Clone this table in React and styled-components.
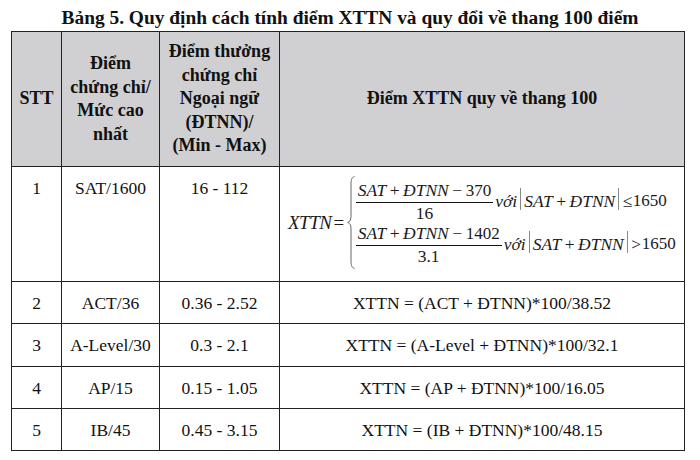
import React from "react";
import styled, { createGlobalStyle } from "styled-components";

const GlobalStyle = createGlobalStyle`
  html, body { margin: 0; padding: 0; background: #ffffff; }
  body { font-family: "Liberation Serif", "Times New Roman", serif; color: #111; }
`;

const Page = styled.div`
  width: 700px;
  height: 460px;
  padding-top: 7px;
  box-sizing: border-box;
  display: flex;
  flex-direction: column;
`;

const Title = styled.div`
  font-size: 19.4px;
  font-weight: bold;
  line-height: 22px;
  text-align: center;
  margin-bottom: 2px;
`;

const TableWrap = styled.div`
  padding-left: 11px;
`;

const Table = styled.table`
  border-collapse: collapse;
  table-layout: fixed;
  width: 673px;
`;

const Col = styled.col`
  width: ${(p) => p.$w}px;
`;

const Row = styled.tr`
  height: ${(p) => p.$h}px;
`;

const HeadCell = styled.th`
  background: #d0cfd2;
  border: 1px solid #222;
  font-size: 18px;
  font-weight: bold;
  line-height: 23.5px;
  text-align: center;
  vertical-align: middle;
  padding: 0 4px;
`;

const Cell = styled.td`
  border: 1px solid #222;
  font-size: 17.5px;
  line-height: 20px;
  text-align: center;
  vertical-align: ${(p) => (p.$top ? "top" : "middle")};
  padding: ${(p) => (p.$top ? "11px 2px 0" : "0 2px")};
  white-space: nowrap;
`;

const FormulaCell = styled.td`
  border: 1px solid #222;
  padding: 0 0 3px 8px;
  vertical-align: middle;
`;

const Formula = styled.div`
  display: flex;
  align-items: center;
  font-size: 17.5px;
  line-height: 18px;
  white-space: nowrap;
  color: #1a1a1a;
`;

const Var = styled.span`
  font-style: italic;
`;

const Op = styled.span`
  margin: 0 ${(p) => p.$m ?? 3.5}px;
`;

const Digits = styled.span`
  font-size: 17px;
`;

const Lhs = styled.div`
  display: flex;
  align-items: baseline;
  font-size: 19px;
  letter-spacing: -0.5px;
`;

const BraceBox = styled.svg`
  display: block;
  flex: none;
  margin-left: 1px;
`;

const Cases = styled.div`
  display: flex;
  flex-direction: column;
  gap: 2px;
  margin-left: 1px;
`;

const CaseRow = styled.div`
  display: flex;
  align-items: center;
`;

const Frac = styled.div`
  display: inline-flex;
  flex-direction: column;
  align-items: stretch;
  text-align: center;
`;

const Num = styled.div`
  padding: 0 2px 2px;
  border-bottom: 1px solid #111;
`;

const Den = styled.div`
  padding-top: 1px;
`;

const Cond = styled.div`
  display: flex;
  align-items: center;
  margin-left: 2px;
`;

const Bar = styled.span`
  display: inline-block;
  width: 1px;
  height: 22px;
  background: #888;
  margin: 0 3px 4px;
`;

function Brace() {
  const h = 93;
  const m = h / 2;
  return (
    <BraceBox width="8" height={h} viewBox={`0 0 8 ${h}`}>
      <path
        d={`M7.5 0.5 C4.5 1.5 4 4 4 9 L4 ${m - 6} C4 ${m - 2} 2.5 ${m - 0.5} 0.5 ${m}
            C2.5 ${m + 0.5} 4 ${m + 2} 4 ${m + 6} L4 ${h - 9} C4 ${h - 4} 4.5 ${h - 1.5} 7.5 ${h - 0.5}`}
        fill="none"
        stroke="#666"
        strokeWidth="1"
      />
    </BraceBox>
  );
}

function SatExpr({ k }) {
  return (
    <>
      <Var>SAT</Var>
      <Op>+</Op>
      <Var>ĐTNN</Var>
      <Op>−</Op>
      <Digits>{k}</Digits>
    </>
  );
}

function Condition({ sign }) {
  return (
    <Cond>
      <Var>với</Var>
      <Bar />
      <Var>SAT</Var>
      <Op>+</Op>
      <Var>ĐTNN</Var>
      <Bar />
      <Op $m={0.5}>{sign}</Op>
      <Digits>1650</Digits>
    </Cond>
  );
}

function SatFormula() {
  return (
    <Formula>
      <Lhs>
        <Var>XTTN</Var>
        <Op $m={2}>=</Op>
      </Lhs>
      <Brace />
      <Cases>
        <CaseRow>
          <Frac>
            <Num>
              <SatExpr k="370" />
            </Num>
            <Den>16</Den>
          </Frac>
          <Condition sign="≤" />
        </CaseRow>
        <CaseRow>
          <Frac>
            <Num>
              <SatExpr k="1402" />
            </Num>
            <Den>3.1</Den>
          </Frac>
          <Condition sign=">" />
        </CaseRow>
      </Cases>
    </Formula>
  );
}

const rows = [
  ["2", "ACT/36", "0.36 - 2.52", "XTTN = (ACT + ĐTNN)*100/38.52", 42],
  ["3", "A-Level/30", "0.3 - 2.1", "XTTN = (A-Level + ĐTNN)*100/32.1", 43],
  ["4", "AP/15", "0.15 - 1.05", "XTTN = (AP + ĐTNN)*100/16.05", 42],
  ["5", "IB/45", "0.45 - 3.15", "XTTN = (IB + ĐTNN)*100/48.15", 42],
];

export default function App() {
  return (
    <>
      <GlobalStyle />
      <Page>
        <Title>Bảng 5. Quy định cách tính điểm XTTN và quy đổi về thang 100 điểm</Title>
        <TableWrap>
          <Table>
            <colgroup>
              <Col $w={50} />
              <Col $w={98} />
              <Col $w={120} />
              <Col $w={405} />
            </colgroup>
            <thead>
              <Row $h={135}>
                <HeadCell>STT</HeadCell>
                <HeadCell>
                  Điểm
                  <br />
                  chứng chỉ/
                  <br />
                  Mức cao
                  <br />
                  nhất
                </HeadCell>
                <HeadCell>
                  Điểm thưởng
                  <br />
                  chứng chỉ
                  <br />
                  Ngoại ngữ
                  <br />
                  (ĐTNN)/
                  <br />
                  (Min - Max)
                </HeadCell>
                <HeadCell>Điểm XTTN quy về thang 100</HeadCell>
              </Row>
            </thead>
            <tbody>
              <Row $h={115}>
                <Cell $top>1</Cell>
                <Cell $top>SAT/1600</Cell>
                <Cell $top>16 - 112</Cell>
                <FormulaCell>
                  <SatFormula />
                </FormulaCell>
              </Row>
              {rows.map(([n, cert, range, formula, h]) => (
                <Row key={n} $h={h}>
                  <Cell>{n}</Cell>
                  <Cell>{cert}</Cell>
                  <Cell>{range}</Cell>
                  <Cell>{formula}</Cell>
                </Row>
              ))}
            </tbody>
          </Table>
        </TableWrap>
      </Page>
    </>
  );
}
